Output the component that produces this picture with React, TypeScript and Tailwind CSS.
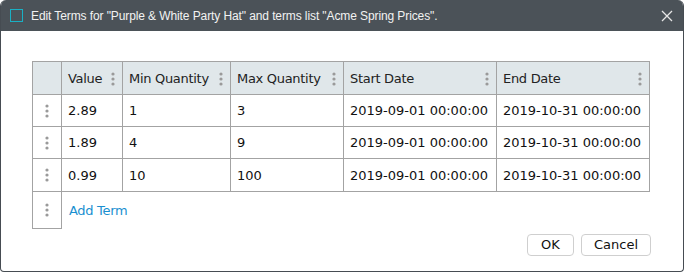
import React from 'react'

const Dots = ({ className = '' }: { className?: string }) => (
  <svg width="4" height="14" viewBox="0 0 4 14" className={className}>
    <circle cx="2" cy="2" r="1.6" fill="#9a9a9a" />
    <circle cx="2" cy="7" r="1.6" fill="#9a9a9a" />
    <circle cx="2" cy="12" r="1.6" fill="#9a9a9a" />
  </svg>
)

const columns = [
  { label: 'Value', w: 'w-[61px]' },
  { label: 'Min Quantity', w: 'w-[108px]' },
  { label: 'Max Quantity', w: 'w-[113px]' },
  { label: 'Start Date', w: 'w-[153px]' },
  { label: 'End Date', w: 'w-[153px]' },
]

const rows = [
  ['2.89', '1', '3', '2019-09-01 00:00:00', '2019-10-31 00:00:00'],
  ['1.89', '4', '9', '2019-09-01 00:00:00', '2019-10-31 00:00:00'],
  ['0.99', '10', '100', '2019-09-01 00:00:00', '2019-10-31 00:00:00'],
]

export default function App() {
  return (
    <div className="w-[684px] h-[272px] bg-white border border-t-0 border-[#464c52] rounded-b-[4px] rounded-t-[6px] overflow-hidden flex flex-col">
      {/* タイトルバー */}
      <div className="h-[31px] bg-[#4b5258] flex items-center pl-[9px] pr-[10px] shrink-0">
        <div className="w-[13px] h-[13px] border border-[#1ab0c4] mr-[8px]" />
        <div className="text-[12px] tracking-[-0.1px] text-[#f2f2f2] font-['Liberation_Sans',sans-serif] flex-1 leading-none pt-[1px]">
          Edit Terms for "Purple &amp; White Party Hat" and terms list "Acme Spring Prices".
        </div>
        <svg width="12" height="12" viewBox="0 0 12 12">
          <path d="M1 1L11 11M11 1L1 11" stroke="#e6e6e6" strokeWidth="1.3" />
        </svg>
      </div>

      {/* 本体 */}
      <div className="flex-1 pl-[31px] pt-[30px] font-['DejaVu_Sans',sans-serif] text-[13px] text-[#111]">
        <div className="w-[618px] border border-[#a3a3a3]">
          <div className="flex h-[33px] bg-[#e0e7ea] border-b border-[#a3a3a3]">
            <div className="w-[29px] border-r border-[#a3a3a3]" />
            {columns.map((c, i) => (
              <div
                key={c.label}
                className={`${c.w} ${i < columns.length - 1 ? 'border-r border-[#a3a3a3]' : 'flex-1'} flex items-center justify-between pl-[6px] pr-[7px] pt-[1px] text-[#222] tracking-[-0.3px]`}
              >
                <span>{c.label}</span>
                <Dots />
              </div>
            ))}
          </div>
          {rows.map((r, ri) => (
            <div key={ri} className={`flex h-[32px] ${ri < rows.length - 1 ? 'border-b border-[#a3a3a3]' : ''}`}>
              <div className="w-[29px] border-r border-[#a3a3a3] flex items-center justify-center">
                <Dots />
              </div>
              {r.map((v, ci) => (
                <div
                  key={ci}
                  className={`${columns[ci].w} ${ci < r.length - 1 ? 'border-r border-[#a3a3a3]' : 'flex-1'} flex items-center pl-[6px] pt-[1px]`}
                >
                  {v}
                </div>
              ))}
            </div>
          ))}
        </div>
        <div className="flex h-[37px]">
          <div className="w-[30px] border border-t-0 border-[#a3a3a3] flex items-center justify-center">
            <Dots />
          </div>
          <div className="flex items-center pl-[7px] pt-[1px] text-[#1a8fd0] tracking-[-0.3px]">Add Term</div>
        </div>
        <div className="flex justify-end gap-[7px] w-[619px] mt-[5px]">
          <button className="w-[47px] h-[22px] border border-[#cfcfcf] rounded-[4px] bg-white text-[13px] text-[#111]">OK</button>
          <button className="w-[70px] h-[22px] border border-[#cfcfcf] rounded-[4px] bg-white text-[13px] text-[#111]">Cancel</button>
        </div>
      </div>
    </div>
  )
}
